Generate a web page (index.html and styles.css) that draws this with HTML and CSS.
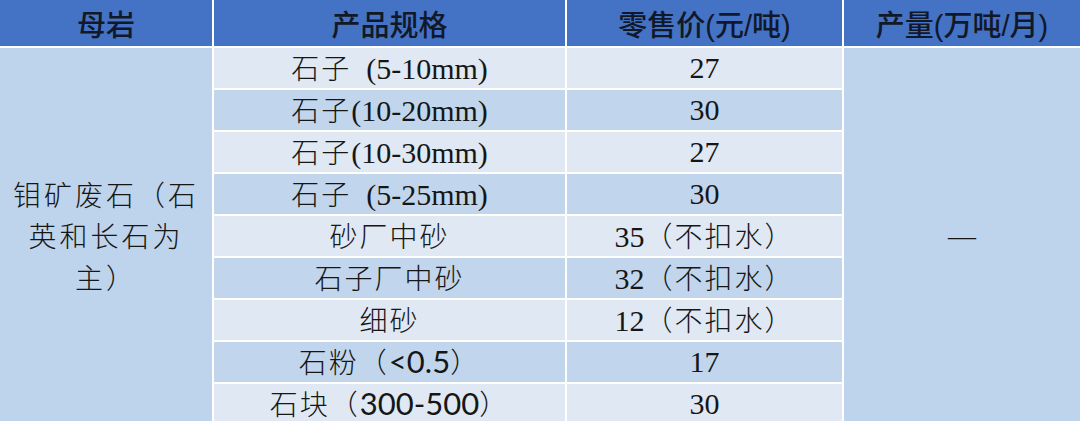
FILE: index.html
```html
<!DOCTYPE html>
<html lang="zh">
<head>
<meta charset="utf-8">
<link rel="stylesheet" href="styles.css">
</head>
<body>
<table class="price-table">
  <colgroup>
    <col class="c1"><col class="c2"><col class="c3"><col class="c4">
  </colgroup>
  <thead>
    <tr>
      <th>母岩</th>
      <th>产品规格</th>
      <th>零售价(元/吨)</th>
      <th>产量(万吨/月)</th>
    </tr>
  </thead>
  <tbody>
    <tr class="odd">
      <td class="merged rock" rowspan="9">钼矿废石（石<br>英和长石为<br>主）</td>
      <td><span class="cn">石子</span>&nbsp; (5-10mm)</td>
      <td>27</td>
      <td class="merged dash" rowspan="9">—</td>
    </tr>
    <tr class="even"><td><span class="cn">石子</span>(10-20mm)</td><td>30</td></tr>
    <tr class="odd"><td><span class="cn">石子</span>(10-30mm)</td><td>27</td></tr>
    <tr class="even"><td><span class="cn">石子</span>&nbsp; (5-25mm)</td><td>30</td></tr>
    <tr class="odd"><td><span class="cn">砂厂中砂</span></td><td>35<span class="cn">（不扣水）</span></td></tr>
    <tr class="even"><td><span class="cn">石子厂中砂</span></td><td>32<span class="cn">（不扣水）</span></td></tr>
    <tr class="odd"><td><span class="cn">细砂</span></td><td>12<span class="cn">（不扣水）</span></td></tr>
    <tr class="even"><td><span class="cn">石粉（</span><span class="sans">&lt;0.5</span><span class="cn">）</span></td><td>17</td></tr>
    <tr class="odd"><td><span class="cn">石块（</span><span class="sans">300-500</span><span class="cn">）</span></td><td>30</td></tr>
  </tbody>
</table>
</body>
</html>
```

FILE: styles.css
```css
html, body {
  margin: 0;
  padding: 0;
  background: #ffffff;
}

body {
  width: 1080px;
  height: 421px;
  overflow: hidden;
}

.price-table {
  width: 1080px;
  border-collapse: collapse;
  table-layout: fixed;
  font-family: "Liberation Serif", "Noto Sans CJK SC", serif;
  font-size: 30px;
  color: #161616;
}

.c1 { width: 213px; }
.c2 { width: 353px; }
.c3 { width: 277px; }
.c4 { width: 237px; }

.price-table th,
.price-table td {
  border: 2px solid #ffffff;
  padding: 0;
  text-align: center;
  vertical-align: middle;
  white-space: nowrap;
}

.price-table th {
  height: 46px;
  background: #4472c4;
  font-family: "Liberation Sans", "Noto Sans CJK SC", sans-serif;
  font-weight: 500;
  font-size: 29px;
  color: #111827;
  border-top: 0;
}

.price-table th:first-child,
.price-table td.rock { border-left: 0; }
.price-table th:last-child,
.price-table td.dash { border-right: 0; }

.price-table tbody td {
  height: 40px;
  line-height: 30px;
}

.cn {
  font-family: "Noto Sans CJK SC", sans-serif;
  font-size: 28px;
  font-weight: 300;
  letter-spacing: 2px;
}

.odd td { background: #dfe8f3; }
.even td { background: #c1d6ed; }

.price-table td.merged {
  background: #bed4ec;
}

.price-table td.rock {
  font-family: "Noto Sans CJK SC", sans-serif;
  font-size: 28px;
  font-weight: 300;
  line-height: 41.5px;
  letter-spacing: 3px;
}

.price-table td.dash {
  font-size: 28px;
  line-height: 28px;
}

.sans {
  font-family: "Lato", "Liberation Sans", sans-serif;
  font-size: 31px;
  letter-spacing: 0;
}
```
